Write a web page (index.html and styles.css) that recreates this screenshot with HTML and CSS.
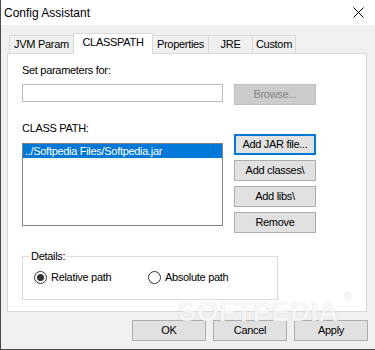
FILE: index.html
```html
<!DOCTYPE html>
<html>
<head>
<meta charset="utf-8">
<link rel="stylesheet" href="styles.css">
</head>
<body>
<div class="window">
  <div class="titlebar">
    <span class="title">Config Assistant</span>
    <svg class="close" width="11" height="11" viewBox="0 0 11 11"><path d="M0.5 0.5L10.5 10.5M10.5 0.5L0.5 10.5" stroke="#000" stroke-width="1" fill="none"/></svg>
  </div>
  <div class="body">
    <div class="tabs">
      <div class="tab t1">JVM Param</div>
      <div class="tab t2 active">CLASSPATH</div>
      <div class="tab t3">Properties</div>
      <div class="tab t4">JRE</div>
      <div class="tab t5">Custom</div>
    </div>
    <div class="panel">
      <div class="label">Set parameters for:</div>
      <div class="row param-row">
        <div class="input"></div>
        <div class="btn disabled">Browse...</div>
      </div>
      <div class="row cp-row">
        <div class="cp-left">
          <div class="label">CLASS PATH:</div>
          <div class="listbox">
            <div class="item selected">../Softpedia Files/Softpedia.jar</div>
          </div>
        </div>
        <div class="cp-buttons">
          <div class="btn focused">Add JAR file...</div>
          <div class="btn">Add classes\</div>
          <div class="btn">Add libs\</div>
          <div class="btn">Remove</div>
        </div>
      </div>
      <div class="group">
        <span class="legend">Details:</span>
        <div class="radios">
          <div class="radio r1"><span class="circle checked"></span><span>Relative path</span></div>
          <div class="radio"><span class="circle"></span><span>Absolute path</span></div>
        </div>
      </div>
    </div>
    <div class="footer">
      <div class="btn fbtn">OK</div>
      <div class="btn fbtn">Cancel</div>
      <div class="btn fbtn">Apply</div>
    </div>
  </div>
  <div class="watermark">SOFTPEDIA<span class="reg">®</span></div>
</div>
</body>
</html>
```
FILE: styles.css
```css
html, body {
  margin: 0;
  padding: 0;
}
body {
  font-family: "Liberation Sans", Arial, sans-serif;
  font-size: 11px;
  color: #000;
  background: #f0f0f0;
}
.window {
  position: relative;
  width: 375px;
  height: 350px;
  box-sizing: border-box;
  border-left: 1px solid #4a4a4a;
  border-bottom: 1px solid #4a4a4a;
  background: #f0f0f0;
  overflow: hidden;
}
.titlebar {
  height: 25px;
  background: #fff;
  display: flex;
  align-items: center;
  justify-content: space-between;
  padding: 0 11px 0 3px;
}
.title {
  font-size: 12px;
  line-height: 14px;
  padding-top: 1px;
}
.close {
  display: block;
  margin-top: 0px;
}
.body {
  padding: 8px 7px 0 6px;
  letter-spacing: -0.3px;
}
.tabs {
  display: flex;
  align-items: flex-end;
  height: 20px;
  margin-left: 2px;
  position: relative;
  z-index: 2;
}
.tab {
  box-sizing: border-box;
  height: 18px;
  border: 1px solid #d9d9d9;
  border-bottom: none;
  background: #f0f0f0;
  text-align: center;
  line-height: 13px;
  padding-top: 2px;
  margin-left: -1px;
}
.t1 { width: 65px; margin-left: 0; }
.t2 { width: 80px; }
.t3 { width: 57px; }
.t4 { width: 45px; }
.t5 { width: 44px; }
.tab.active {
  height: 21px;
  margin-bottom: -1px;
  background: #fff;
  position: relative;
  z-index: 3;
}
.panel {
  box-sizing: border-box;
  width: 360px;
  height: 259px;
  border: 1px solid #d9d9d9;
  background: #fff;
  padding: 10px 0 0 14px;
}
.label {
  line-height: 13px;
  height: 13px;
}
.row {
  display: flex;
  align-items: flex-start;
}
.param-row {
  margin-top: 7px;
  gap: 11px;
}
.input {
  box-sizing: border-box;
  width: 201px;
  height: 18px;
  border: 1px solid #bcbcbc;
  background: #fff;
}
.btn {
  box-sizing: border-box;
  width: 82px;
  height: 21px;
  border: 1px solid #adadad;
  background: #e1e1e1;
  text-align: center;
  line-height: 19px;
  white-space: nowrap;
}
.btn.disabled {
  background: #cccccc;
  border-color: #bfbfbf;
  color: #838383;
}
.btn.focused {
  border: 2px solid #0078d7;
  line-height: 17px;
}
.cp-row {
  margin-top: 17px;
  gap: 11px;
}
.cp-left {
  width: 201px;
}
.listbox {
  box-sizing: border-box;
  margin-top: 8px;
  width: 201px;
  height: 83px;
  border: 1px solid #828282;
  background: #fff;
}
.item {
  height: 14px;
  line-height: 14px;
  padding-left: 2px;
  white-space: nowrap;
}
.item.selected {
  background: #0078d7;
  color: #fff;
}
.cp-buttons {
  margin-top: 12px;
  display: flex;
  flex-direction: column;
  gap: 5px;
}
.group {
  position: relative;
  box-sizing: border-box;
  margin-top: 23px;
  width: 256px;
  height: 44px;
  border: 1px solid #dcdcdc;
}
.legend {
  position: absolute;
  left: 6px;
  top: -7px;
  background: #fff;
  padding: 0 2px;
  line-height: 13px;
}
.radios {
  display: flex;
  align-items: center;
  padding: 14px 0 0 11px;
}
.radio {
  display: flex;
  align-items: center;
  gap: 4px;
  line-height: 13px;
}
.r1 {
  width: 114px;
}
.circle {
  box-sizing: border-box;
  width: 13px;
  height: 13px;
  border: 1px solid #333;
  border-radius: 50%;
  background: #fff;
  display: flex;
  align-items: center;
  justify-content: center;
}
.circle.checked::after {
  content: "";
  width: 7px;
  height: 7px;
  border-radius: 50%;
  background: #333;
}
.footer {
  display: flex;
  justify-content: flex-end;
  gap: 7px;
  margin-top: 8px;
}
.fbtn {
  width: 74px;
}
.watermark {
  position: absolute;
  left: 177px;
  top: 298px;
  font-size: 28px;
  line-height: 28px;
  font-weight: bold;
  letter-spacing: 0;
  color: rgba(255, 255, 255, 0.85);
  text-shadow: 0 0 1px rgba(0, 0, 0, 0.18);
  pointer-events: none;
}
.reg {
  position: absolute;
  left: 166px;
  top: -6px;
  font-size: 10px;
  line-height: 10px;
  font-weight: normal;
}
```
